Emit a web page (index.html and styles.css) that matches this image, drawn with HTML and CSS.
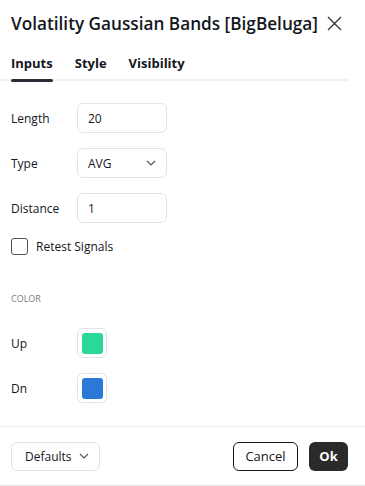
FILE: index.html
```html
<!DOCTYPE html>
<html lang="en">
<head>
    <meta charset="UTF-8">
    <meta name="viewport" content="width=device-width, initial-scale=1.0">
    <title>Volatility Gaussian Bands</title>
    <link rel="stylesheet" href="styles.css">
</head>
<body>
    <div class="dialog">
        <div class="header">
            <h1>Volatility Gaussian Bands [BigBeluga]</h1>
            <svg class="close" width="15" height="15" viewBox="0 0 15 15">
                <path d="M1 1L14 14M14 1L1 14" stroke="#333" stroke-width="1.3" fill="none"/>
            </svg>
        </div>
        <div class="tabs">
            <div class="tab active">Inputs</div>
            <div class="tab">Style</div>
            <div class="tab">Visibility</div>
        </div>
        <div class="content">
            <div class="row">
                <label>Length</label>
                <div class="field">20</div>
            </div>
            <div class="row">
                <label>Type</label>
                <div class="field select">AVG
                    <svg width="10" height="6" viewBox="0 0 10 6"><path d="M1 1l4 4 4-4" stroke="#555" stroke-width="1.2" fill="none"/></svg>
                </div>
            </div>
            <div class="row">
                <label>Distance</label>
                <div class="field">1</div>
            </div>
            <div class="check-row">
                <span class="checkbox"></span>
                <span>Retest Signals</span>
            </div>
            <div class="section">COLOR</div>
            <div class="row">
                <label>Up</label>
                <div class="swatch"><span class="up"></span></div>
            </div>
            <div class="row">
                <label>Dn</label>
                <div class="swatch"><span class="dn"></span></div>
            </div>
        </div>
        <div class="footer">
            <div class="defaults">Defaults
                <svg width="10" height="6" viewBox="0 0 10 6"><path d="M1 1l4 4 4-4" stroke="#555" stroke-width="1.2" fill="none"/></svg>
            </div>
            <div class="buttons">
                <button class="cancel">Cancel</button>
                <button class="ok">Ok</button>
            </div>
        </div>
    </div>
</body>
</html>
```

FILE: styles.css
```css
body {
    margin: 0;
    font-family: "Open Sans", "DejaVu Sans", sans-serif;
    color: #131722;
    background: #fff;
}
.dialog {
    width: 365px;
    height: 486px;
    display: flex;
    flex-direction: column;
}
.header {
    display: flex;
    align-items: center;
    padding: 11px 0 0 11px;
    height: 25px;
}
.header h1 {
    margin: 0;
    font-size: 17.2px;
    font-weight: 600;
    white-space: nowrap;
}
.close {
    margin-left: 9px;
}
.tabs {
    display: flex;
    gap: 22px;
    margin: 18px 17px 0 0;
    padding-left: 11px;
    border-bottom: 2px solid #f0f0f0;
    height: 25px;
}
.tab {
    font-size: 13px;
    font-weight: 700;
    position: relative;
}
.tab.active::after {
    content: "";
    position: absolute;
    left: 0;
    right: 0;
    bottom: -3px;
    height: 3px;
    border-radius: 2px;
    background: #2a2e39;
}
.content {
    flex: 1;
    padding: 22px 11px 0;
    font-size: 12px;
}
.row {
    display: flex;
    align-items: center;
    height: 30px;
    margin-bottom: 15px;
}
.row label {
    width: 66px;
}
.field {
    width: 90px;
    height: 30px;
    box-sizing: border-box;
    border: 1px solid #e0e3eb;
    border-radius: 6px;
    padding: 0 10px;
    display: flex;
    align-items: center;
    justify-content: space-between;
}
.check-row {
    display: flex;
    align-items: center;
    gap: 8px;
}
.checkbox {
    width: 17px;
    height: 17px;
    box-sizing: border-box;
    border: 1px solid #50535e;
    border-radius: 3px;
}
.section {
    font-size: 9px;
    color: #787b86;
    margin: 37px 0 23px;
}
.swatch {
    width: 30px;
    height: 30px;
    box-sizing: border-box;
    border: 1px solid #e0e3eb;
    border-radius: 6px;
    display: flex;
    align-items: center;
    justify-content: center;
}
.swatch span {
    width: 21px;
    height: 21px;
    border-radius: 3px;
}
.up { background: #2bd898; }
.dn { background: #2a78d8; }
.footer {
    border-top: 1px solid #eceef2;
    border-bottom: 1px solid #e6e6e6;
    height: 58px;
    display: flex;
    align-items: center;
    justify-content: space-between;
    padding: 0 17px 0 11px;
}
.defaults {
    width: 89px;
    height: 29px;
    box-sizing: border-box;
    border: 1px solid #e0e3eb;
    border-radius: 6px;
    font-size: 12px;
    display: flex;
    align-items: center;
    justify-content: space-between;
    padding: 0 10px 0 13px;
}
.buttons {
    display: flex;
    gap: 11px;
}
button {
    font-family: inherit;
    font-size: 13px;
    height: 29px;
    border-radius: 6px;
    cursor: pointer;
}
.cancel {
    width: 65px;
    background: #fff;
    border: 1px solid #131722;
    color: #131722;
}
.ok {
    width: 39px;
    background: #2a2a2a;
    border: none;
    color: #fff;
    font-weight: 700;
}
```
